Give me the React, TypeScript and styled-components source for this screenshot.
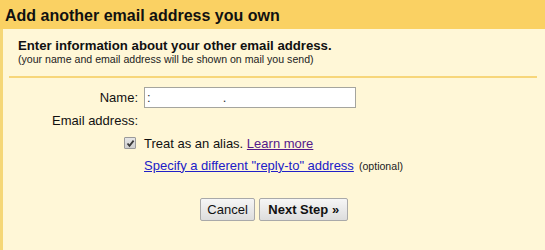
import React from "react";
import styled, { createGlobalStyle } from "styled-components";

const GlobalStyle = createGlobalStyle`
  html, body {
    margin: 0;
    padding: 0;
    background: #fff7d7;
  }
  body {
    font-family: "Liberation Sans", Arial, sans-serif;
    color: #000;
    width: 545px;
    height: 250px;
    overflow: hidden;
  }
`;

const Page = styled.div`
  display: flex;
  flex-direction: column;
  width: 545px;
  height: 250px;
`;

const TitleBar = styled.h1`
  margin: 0;
  height: 29px;
  box-sizing: border-box;
  padding: 2px 0 0 5px;
  line-height: 27px;
  background: #fad163;
  font-size: 16px;
  font-weight: bold;
  color: #111;
`;

const Panel = styled.div`
  flex: 1;
  display: flex;
  flex-direction: column;
  border-left: 3px solid #f5d777;
  background: #fff7d7;
`;

const Intro = styled.div`
  padding: 9px 15px 0 15px;
`;

const Lead = styled.div`
  font-size: 13.2px;
  font-weight: bold;
  line-height: 15px;
  color: #111;
`;

const Note = styled.div`
  font-size: 10.6px;
  line-height: 12px;
  color: #222;
`;

const Divider = styled.div`
  height: 2px;
  margin: 11px 8px 0 6px;
  background: #f7d67a;
`;

const Form = styled.div`
  display: grid;
  grid-template-columns: 120px 1fr;
  grid-template-rows: 22px 24px 22px 22px;
  column-gap: 6px;
  align-items: center;
  padding-left: 15px;
  margin-top: 8px;
  font-size: 13px;
  color: #111;
`;

const Label = styled.label`
  text-align: right;
  white-space: nowrap;
`;

const TextInput = styled.input`
  width: 212px;
  height: 21px;
  box-sizing: border-box;
  border: 1px solid #a5a59e;
  background: #fff;
  padding: 1px 2px;
  font-family: "Liberation Sans", Arial, sans-serif;
  font-size: 13px;
  color: #333;
  outline: none;
`;

const CheckCell = styled.div`
  display: flex;
  justify-content: flex-end;
  padding-right: 2px;
`;

const CheckBox = styled.span`
  display: inline-flex;
  align-items: center;
  justify-content: center;
  width: 12px;
  height: 12px;
  box-sizing: border-box;
  border: 1px solid #9a9a9a;
  border-radius: 1px;
  background: linear-gradient(#e6e6e6, #cfcfcf);
`;

const Line = styled.div`
  white-space: nowrap;
`;

const Link = styled.a<{ $visited?: boolean }>`
  color: ${(p) => (p.$visited ? "#551a8b" : "#2020c8")};
  text-decoration: underline;
  cursor: pointer;
`;

const Small = styled.span`
  font-size: 10.6px;
  color: #222;
  margin-left: 5px;
`;

const Actions = styled.div`
  display: flex;
  justify-content: center;
  gap: 4px;
  margin-top: 22px;
`;

const Button = styled.button<{ $primary?: boolean }>`
  height: 23px;
  box-sizing: border-box;
  padding: 0 ${(p) => (p.$primary ? "8px" : "6.5px")};
  border: 1px solid #a9a9a9;
  border-radius: 2px;
  background: linear-gradient(#f6f6f6, #dddddd);
  font-family: "Liberation Sans", Arial, sans-serif;
  font-size: 13px;
  font-weight: ${(p) => (p.$primary ? "bold" : "normal")};
  color: #111;
  line-height: 21px;
`;

export default function App() {
  return (
    <>
      <GlobalStyle />
      <Page>
        <TitleBar>Add another email address you own</TitleBar>
        <Panel>
          <Intro>
            <Lead>Enter information about your other email address.</Lead>
            <Note>(your name and email address will be shown on mail you send)</Note>
          </Intro>
          <Divider />
          <Form>
            <Label htmlFor="name">Name:</Label>
            <TextInput id="name" defaultValue={":                    ."} />
            <Label>Email address:</Label>
            <span />
            <CheckCell>
              <CheckBox>
                <svg width="9" height="9" viewBox="0 0 9 9">
                  <path d="M1.5 4.5 L3.5 6.8 L7.6 1.6" fill="none" stroke="#3a3a3a" strokeWidth="1.8" />
                </svg>
              </CheckBox>
            </CheckCell>
            <Line>
              Treat as an alias. <Link $visited>Learn more</Link>
            </Line>
            <span />
            <Line>
              <Link>Specify a different "reply-to" address</Link>
              <Small>(optional)</Small>
            </Line>
          </Form>
          <Actions>
            <Button>Cancel</Button>
            <Button $primary>Next Step »</Button>
          </Actions>
        </Panel>
      </Page>
    </>
  );
}
